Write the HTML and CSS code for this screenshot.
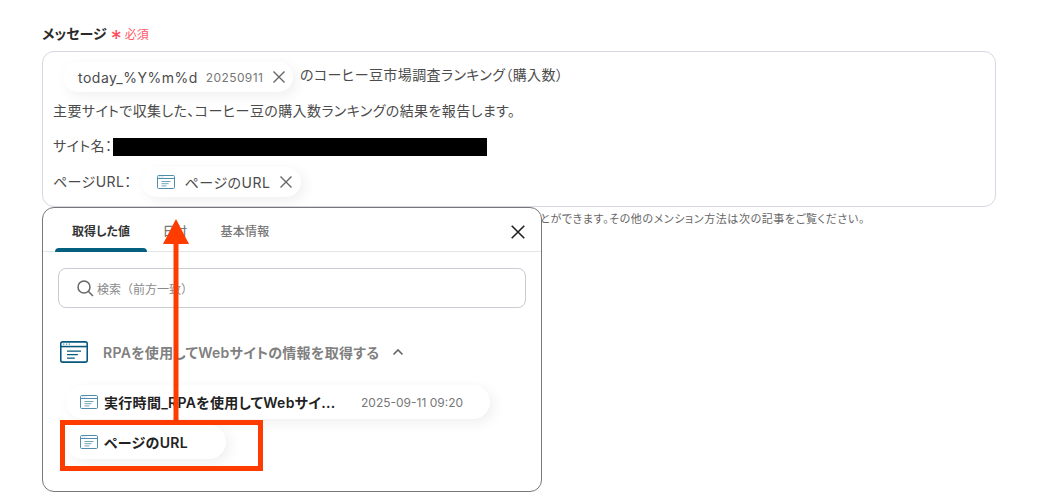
FILE: index.html
```html
<!DOCTYPE html>
<html lang="ja">
<head>
<meta charset="utf-8">
<title>メッセージ</title>
<link rel="stylesheet" href="styles.css">
</head>
<body>
<svg width="0" height="0" class="defs"><defs>
<symbol id="win" viewBox="0 0 18 14"><rect x=".5" y=".5" width="17" height="13" rx="1.2" fill="#fff" stroke="currentColor"/><path d="M.5 3.5h17" stroke="currentColor" fill="none"/><path d="M2 2h.8M3.8 2h.8M5.6 2h.8" stroke="currentColor" stroke-width=".8" opacity=".7"/><path d="M4.500 6.500h9M4.500 8.700h7M4.500 10.900h5" stroke="currentColor" stroke-width=".8" fill="none"/></symbol>
<symbol id="x" viewBox="0 0 14 14"><path d="M1.500 1.500l11 11M12.500 1.500l-11 11" stroke="currentColor" stroke-width="1.400" fill="none"/></symbol>
</defs></svg>
<main class="form">
  <div class="label-row"><span class="label">メッセージ</span><span class="star">*</span><span class="req">必須</span></div>
  <div class="editor">
    <div class="line line-first"><span class="chip chip-date"><span class="chip-name">today_%Y%m%d</span><span class="chip-val">20250911</span><svg class="chip-x"><use href="#x"/></svg></span><span class="after">のコーヒー豆市場調査ランキング（購入数）</span></div>
    <div class="line">主要サイトで収集した、コーヒー豆の購入数ランキングの結果を報告します。</div>
    <div class="line">サイト名：<span class="redact"></span></div>
    <div class="line line-last">ページURL：<span class="chip chip-url"><svg class="win-s"><use href="#win"/></svg><span class="chip-name">ページのURL</span><svg class="chip-x"><use href="#x"/></svg></span></div>
  </div>
  <p class="help">ことができます。その他のメンション方法は次の記事をご覧ください。</p>

  <section class="pop">
    <div class="tabs">
      <span class="tab tab-on">取得した値</span>
      <span class="tab tab-date">日付</span>
      <span class="tab tab-info">基本情報</span>
      <svg class="pop-x"><use href="#x"/></svg>
    </div>
    <div class="search">
      <svg class="search-i" viewBox="0 0 18 18"><circle cx="8" cy="8" r="6" fill="none" stroke="currentColor" stroke-width="1.500"/><path d="M12.500 12.500l4.500 4.500" stroke="currentColor" stroke-width="1.500"/></svg>
      <span>検索（前方一致）</span>
    </div>
    <div class="group">
      <svg class="win-l"><use href="#win"/></svg>
      <span class="group-name">RPAを使用してWebサイトの情報を取得する</span>
      <svg class="caret" viewBox="0 0 12 8"><path d="M1.500 6.500L6 2l4.500 4.500" fill="none" stroke="currentColor" stroke-width="1.600"/></svg>
    </div>
    <div class="items">
      <div class="item"><svg class="win-s"><use href="#win"/></svg><span class="item-name item-long">実行時間_RPAを使用してWebサイ...</span><span class="item-val">2025-09-11 09:20</span></div>
      <div class="item item-b"><svg class="win-s"><use href="#win"/></svg><span class="item-name">ページのURL</span></div>
    </div>
  </section>

  <svg class="note" width="1048" height="502" viewBox="0 0 1048 502">
    <path d="M173.500 240h5v182h-5z" fill="#ff3c00"/>
    <path d="M176 219l13 25h-26z" fill="#ff3c00"/>
    <rect x="62.500" y="422.500" width="198" height="46" fill="none" stroke="#ff3c00" stroke-width="5"/>
  </svg>
</main>
</body>
</html>
```

FILE: styles.css
```css
* { box-sizing: border-box; }
html, body { margin: 0; height: 100%; background: #fff; overflow: hidden; }
body { font-family: Inter, "Noto Sans CJK JP", sans-serif; color: #4b4b4b; font-feature-settings: "palt"; }
.defs { position: absolute; }
.form { position: relative; width: 1048px; height: 502px; padding: 24px 52px 0 42px; }
.label-row { display: flex; align-items: center; height: 18px; }
.label { font-size: 14px; font-weight: 600; color: #2a2a2a; }
.star { color: #ff4a5a; font-size: 22px; margin-left: 4px; line-height: 18px; padding-top: 9px; }
.req { color: #ff5a68; font-size: 12px; margin-left: 3px; }
.editor { margin-top: 9px; height: 156px; border: 1px solid #d5d8e2; border-radius: 12px; padding: 9px 10px 0; font-size: 14px; letter-spacing: .4px; }
.line { display: flex; align-items: center; height: 35px; white-space: nowrap; }
.line-first { height: 32px; margin-bottom: -1px; }
.line-last { margin-top: 1px; }
.chip { display: inline-flex; align-items: center; height: 30px; border-radius: 15px; background: #fff; box-shadow: 4px 4px 12px rgba(60, 60, 90, .08); }
.chip-date { width: 230px; margin-left: 10px; padding-left: 15px; }
.chip-url { width: 159px; margin: 2px 0 0 10px; padding-left: 15px; }
.chip-name { font-size: 14px; color: #4b4b4b; }
.chip-date .chip-name { letter-spacing: .5px; }
.chip-val { font-size: 12px; color: #777; margin-left: 8px; letter-spacing: .4px; }
.chip-x { width: 14px; height: 14px; color: #666; margin-left: 9px; }
.after { margin: 0 0 6px 7px; }
.win-s { width: 18px; height: 14px; color: #4f8dab; flex: none; }
.chip-url .chip-name { margin-left: 10px; letter-spacing: .5px; }
.redact { display: inline-block; width: 374px; height: 18px; background: #000; margin: 4px 0 0 1px; }
.help { margin: 5px 131px 0 0; text-align: right; font-size: 11px; letter-spacing: .6px; line-height: 14px; color: #666; }
.pop { position: absolute; left: 42px; top: 207px; width: 500px; height: 285px; background: #fff; border: 1px solid #77777a; border-radius: 12px; }
.tabs { position: relative; display: flex; height: 44px; border-bottom: 1px solid #e4e5e8; font-size: 12px; font-weight: 500; color: #777; letter-spacing: .2px; }
.tab { position: relative; display: flex; align-items: center; justify-content: center; height: 44px; }
.tab-on { width: 92px; margin-left: 12px; color: #333; font-weight: 600; letter-spacing: 0; }
.tab-on::after { content: ""; position: absolute; left: 0; right: 0; bottom: 0; height: 4px; background: #05607f; border-radius: 4px 4px 0 0; }
.tab-date { width: 44px; margin-left: 6px; }
.tab-info { width: 52px; margin-left: 22px; }
.pop-x { position: absolute; right: 15px; top: 16px; width: 16px; height: 16px; color: #222; }
.search { display: flex; align-items: center; margin: 16px 15px 0 15px; height: 40px; border: 1px solid #c9ccd2; border-radius: 8px; padding-left: 17px; font-size: 12px; color: #8a8a8a; font-feature-settings: normal; }
.search-i { width: 18px; height: 18px; color: #666; margin-right: 3px; }
.group { display: flex; align-items: center; margin: 31px 0 0 17px; height: 26px; }
.win-l { width: 28px; height: 22px; color: #07587c; flex: none; }
.group-name { margin-left: 15px; font-size: 14px; font-weight: 600; color: #808080; letter-spacing: .3px; }
.caret { width: 12px; height: 8px; margin-left: 13px; color: #666; }
.items { display: flex; flex-direction: column; align-items: flex-start; gap: 6px; margin: 20px 0 0 23px; }
.item { display: flex; align-items: center; height: 34px; padding-left: 14px; border-radius: 17px; background: #fff; box-shadow: 4px 4px 12px rgba(60, 60, 90, .08); width: 424px; }
.item-b { width: 160px; }
.item-name { margin-left: 6px; font-size: 14px; font-weight: 600; color: #222; white-space: nowrap; letter-spacing: .3px; }
.item-long { width: 257px; }
.item-val { font-size: 12px; color: #777; }
.note { position: absolute; left: 0; top: 0; pointer-events: none; }
```
